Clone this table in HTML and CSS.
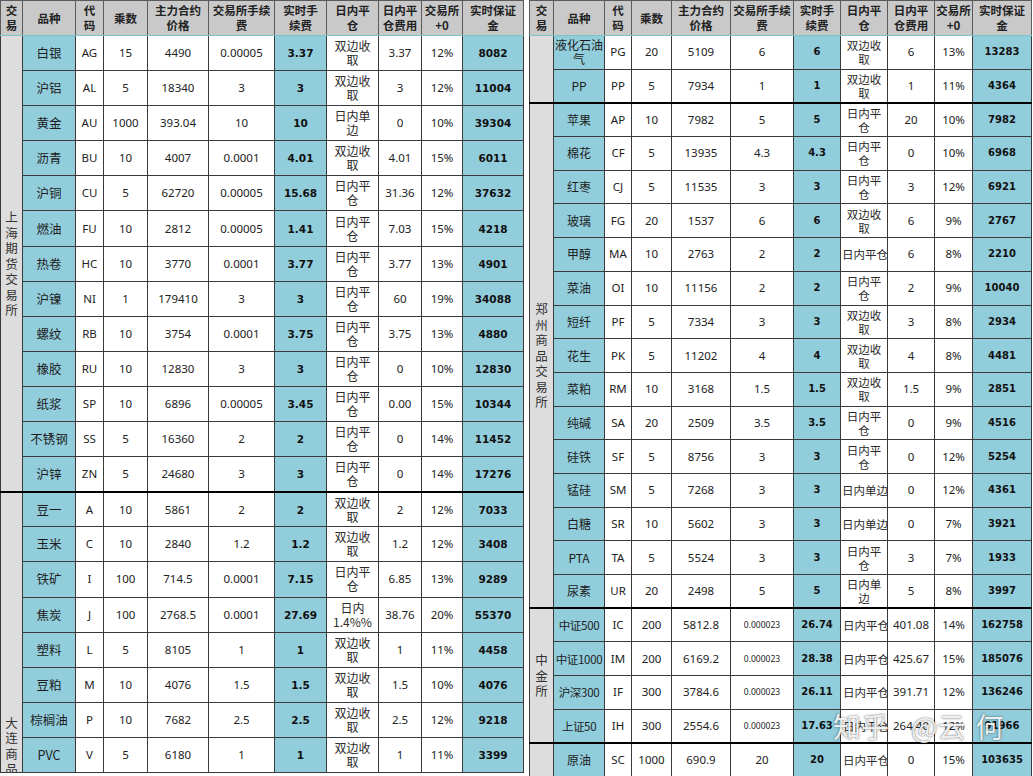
FILE: index.html
```html
<!DOCTYPE html>
<html lang="zh-CN">
<head>
<meta charset="utf-8">
<title>期货品种手续费与保证金</title>
<link rel="stylesheet" href="styles.css">
</head>
<body>
<div class="page">
  <table class="sheet t-left">
    <colgroup>
      <col class="l0"><col class="l1"><col class="l2"><col class="l3"><col class="l4"><col class="l5"><col class="l6"><col class="l7"><col class="l8"><col class="l9"><col class="l10">
    </colgroup>
    <thead>
      <tr class="hd">
        <th>交<br>易</th><th>品种</th><th>代<br>码</th><th>乘数</th><th>主力合约<br>价格</th><th>交易所手续<br>费</th><th>实时手<br>续费</th><th>日内平<br>仓</th><th>日内平<br>仓费用</th><th>交易所<br>+0</th><th>实时保证<br>金</th>
      </tr>
    </thead>
    <tbody>
      <tr class="lr"><td class="ex" rowspan="13">上海期货交易所</td><td class="nm">白银</td><td>AG</td><td>15</td><td>4490</td><td>0.00005</td><td class="fb">3.37</td><td class="zh">双边收<br>取</td><td>3.37</td><td>12%</td><td class="mg">8082</td></tr>
      <tr class="lr"><td class="nm">沪铝</td><td>AL</td><td>5</td><td>18340</td><td>3</td><td class="fb">3</td><td class="zh">双边收<br>取</td><td>3</td><td>12%</td><td class="mg">11004</td></tr>
      <tr class="lr"><td class="nm">黄金</td><td>AU</td><td>1000</td><td>393.04</td><td>10</td><td class="fb">10</td><td class="zh">日内单<br>边</td><td>0</td><td>10%</td><td class="mg">39304</td></tr>
      <tr class="lr"><td class="nm">沥青</td><td>BU</td><td>10</td><td>4007</td><td>0.0001</td><td class="fb">4.01</td><td class="zh">双边收<br>取</td><td>4.01</td><td>15%</td><td class="mg">6011</td></tr>
      <tr class="lr"><td class="nm">沪铜</td><td>CU</td><td>5</td><td>62720</td><td>0.00005</td><td class="fb">15.68</td><td class="zh">日内平<br>仓</td><td>31.36</td><td>12%</td><td class="mg">37632</td></tr>
      <tr class="lr"><td class="nm">燃油</td><td>FU</td><td>10</td><td>2812</td><td>0.00005</td><td class="fb">1.41</td><td class="zh">日内平<br>仓</td><td>7.03</td><td>15%</td><td class="mg">4218</td></tr>
      <tr class="lr"><td class="nm">热卷</td><td>HC</td><td>10</td><td>3770</td><td>0.0001</td><td class="fb">3.77</td><td class="zh">日内平<br>仓</td><td>3.77</td><td>13%</td><td class="mg">4901</td></tr>
      <tr class="lr"><td class="nm">沪镍</td><td>NI</td><td>1</td><td>179410</td><td>3</td><td class="fb">3</td><td class="zh">日内平<br>仓</td><td>60</td><td>19%</td><td class="mg">34088</td></tr>
      <tr class="lr"><td class="nm">螺纹</td><td>RB</td><td>10</td><td>3754</td><td>0.0001</td><td class="fb">3.75</td><td class="zh">日内平<br>仓</td><td>3.75</td><td>13%</td><td class="mg">4880</td></tr>
      <tr class="lr"><td class="nm">橡胶</td><td>RU</td><td>10</td><td>12830</td><td>3</td><td class="fb">3</td><td class="zh">日内平<br>仓</td><td>0</td><td>10%</td><td class="mg">12830</td></tr>
      <tr class="lr"><td class="nm">纸浆</td><td>SP</td><td>10</td><td>6896</td><td>0.00005</td><td class="fb">3.45</td><td class="zh">日内平<br>仓</td><td>0.00</td><td>15%</td><td class="mg">10344</td></tr>
      <tr class="lr"><td class="nm">不锈钢</td><td>SS</td><td>5</td><td>16360</td><td>2</td><td class="fb">2</td><td class="zh">日内平<br>仓</td><td>0</td><td>14%</td><td class="mg">11452</td></tr>
      <tr class="lr"><td class="nm">沪锌</td><td>ZN</td><td>5</td><td>24680</td><td>3</td><td class="fb">3</td><td class="zh">日内平<br>仓</td><td>0</td><td>14%</td><td class="mg">17276</td></tr>
      <tr class="lr grp"><td class="ex ex-top" rowspan="8"><div class="ex-cut">大连商品交易所</div></td><td class="nm">豆一</td><td>A</td><td>10</td><td>5861</td><td>2</td><td class="fb">2</td><td class="zh">双边收<br>取</td><td>2</td><td>12%</td><td class="mg">7033</td></tr>
      <tr class="lr"><td class="nm">玉米</td><td>C</td><td>10</td><td>2840</td><td>1.2</td><td class="fb">1.2</td><td class="zh">双边收<br>取</td><td>1.2</td><td>12%</td><td class="mg">3408</td></tr>
      <tr class="lr"><td class="nm">铁矿</td><td>I</td><td>100</td><td>714.5</td><td>0.0001</td><td class="fb">7.15</td><td class="zh">日内平<br>仓</td><td>6.85</td><td>13%</td><td class="mg">9289</td></tr>
      <tr class="lr"><td class="nm">焦炭</td><td>J</td><td>100</td><td>2768.5</td><td>0.0001</td><td class="fb">27.69</td><td class="zh">日内<br>1.4%%</td><td>38.76</td><td>20%</td><td class="mg">55370</td></tr>
      <tr class="lr"><td class="nm">塑料</td><td>L</td><td>5</td><td>8105</td><td>1</td><td class="fb">1</td><td class="zh">双边收<br>取</td><td>1</td><td>11%</td><td class="mg">4458</td></tr>
      <tr class="lr"><td class="nm">豆粕</td><td>M</td><td>10</td><td>4076</td><td>1.5</td><td class="fb">1.5</td><td class="zh">双边收<br>取</td><td>1.5</td><td>10%</td><td class="mg">4076</td></tr>
      <tr class="lr"><td class="nm">棕榈油</td><td>P</td><td>10</td><td>7682</td><td>2.5</td><td class="fb">2.5</td><td class="zh">双边收<br>取</td><td>2.5</td><td>12%</td><td class="mg">9218</td></tr>
      <tr class="lr"><td class="nm">PVC</td><td>V</td><td>5</td><td>6180</td><td>1</td><td class="fb">1</td><td class="zh">双边收<br>取</td><td>1</td><td>11%</td><td class="mg">3399</td></tr>
    </tbody>
  </table>

  <table class="sheet t-right">
    <colgroup>
      <col class="r0"><col class="r1"><col class="r2"><col class="r3"><col class="r4"><col class="r5"><col class="r6"><col class="r7"><col class="r8"><col class="r9"><col class="r10">
    </colgroup>
    <thead>
      <tr class="hd">
        <th>交<br>易</th><th>品种</th><th>代<br>码</th><th>乘数</th><th>主力合约<br>价格</th><th>交易所手续<br>费</th><th>实时手<br>续费</th><th>日内平<br>仓</th><th>日内平<br>仓费用</th><th>交易所<br>+0</th><th>实时保证<br>金</th>
      </tr>
    </thead>
    <tbody>
      <tr class="rr"><td class="ex" rowspan="2"></td><td class="nm">液化石油<br>气</td><td>PG</td><td>20</td><td>5109</td><td>6</td><td class="fb">6</td><td class="zh">双边收<br>取</td><td>6</td><td>13%</td><td class="mg">13283</td></tr>
      <tr class="rr"><td class="nm">PP</td><td>PP</td><td>5</td><td>7934</td><td>1</td><td class="fb">1</td><td class="zh">双边收<br>取</td><td>1</td><td>11%</td><td class="mg">4364</td></tr>
      <tr class="rr grp"><td class="ex" rowspan="15">郑州商品交易所</td><td class="nm">苹果</td><td>AP</td><td>10</td><td>7982</td><td>5</td><td class="fb">5</td><td class="zh">日内平<br>仓</td><td>20</td><td>10%</td><td class="mg">7982</td></tr>
      <tr class="rr"><td class="nm">棉花</td><td>CF</td><td>5</td><td>13935</td><td>4.3</td><td class="fb">4.3</td><td class="zh">日内平<br>仓</td><td>0</td><td>10%</td><td class="mg">6968</td></tr>
      <tr class="rr"><td class="nm">红枣</td><td>CJ</td><td>5</td><td>11535</td><td>3</td><td class="fb">3</td><td class="zh">日内平<br>仓</td><td>3</td><td>12%</td><td class="mg">6921</td></tr>
      <tr class="rr"><td class="nm">玻璃</td><td>FG</td><td>20</td><td>1537</td><td>6</td><td class="fb">6</td><td class="zh">双边收<br>取</td><td>6</td><td>9%</td><td class="mg">2767</td></tr>
      <tr class="rr"><td class="nm">甲醇</td><td>MA</td><td>10</td><td>2763</td><td>2</td><td class="fb">2</td><td class="zh one">日内平仓</td><td>6</td><td>8%</td><td class="mg">2210</td></tr>
      <tr class="rr"><td class="nm">菜油</td><td>OI</td><td>10</td><td>11156</td><td>2</td><td class="fb">2</td><td class="zh">日内平<br>仓</td><td>2</td><td>9%</td><td class="mg">10040</td></tr>
      <tr class="rr"><td class="nm">短纤</td><td>PF</td><td>5</td><td>7334</td><td>3</td><td class="fb">3</td><td class="zh">双边收<br>取</td><td>3</td><td>8%</td><td class="mg">2934</td></tr>
      <tr class="rr"><td class="nm">花生</td><td>PK</td><td>5</td><td>11202</td><td>4</td><td class="fb">4</td><td class="zh">双边收<br>取</td><td>4</td><td>8%</td><td class="mg">4481</td></tr>
      <tr class="rr"><td class="nm">菜粕</td><td>RM</td><td>10</td><td>3168</td><td>1.5</td><td class="fb">1.5</td><td class="zh">双边收<br>取</td><td>1.5</td><td>9%</td><td class="mg">2851</td></tr>
      <tr class="rr"><td class="nm">纯碱</td><td>SA</td><td>20</td><td>2509</td><td>3.5</td><td class="fb">3.5</td><td class="zh">日内平<br>仓</td><td>0</td><td>9%</td><td class="mg">4516</td></tr>
      <tr class="rr"><td class="nm">硅铁</td><td>SF</td><td>5</td><td>8756</td><td>3</td><td class="fb">3</td><td class="zh">日内平<br>仓</td><td>0</td><td>12%</td><td class="mg">5254</td></tr>
      <tr class="rr"><td class="nm">锰硅</td><td>SM</td><td>5</td><td>7268</td><td>3</td><td class="fb">3</td><td class="zh one">日内单边</td><td>0</td><td>12%</td><td class="mg">4361</td></tr>
      <tr class="rr"><td class="nm">白糖</td><td>SR</td><td>10</td><td>5602</td><td>3</td><td class="fb">3</td><td class="zh one">日内单边</td><td>0</td><td>7%</td><td class="mg">3921</td></tr>
      <tr class="rr"><td class="nm">PTA</td><td>TA</td><td>5</td><td>5524</td><td>3</td><td class="fb">3</td><td class="zh">日内平<br>仓</td><td>3</td><td>7%</td><td class="mg">1933</td></tr>
      <tr class="rr"><td class="nm">尿素</td><td>UR</td><td>20</td><td>2498</td><td>5</td><td class="fb">5</td><td class="zh">日内单<br>边</td><td>5</td><td>8%</td><td class="mg">3997</td></tr>
      <tr class="rr grp"><td class="ex" rowspan="4">中金所</td><td class="nm one">中证500</td><td>IC</td><td>200</td><td>5812.8</td><td class="sm">0.000023</td><td class="fb">26.74</td><td class="zh one clip">日内平仓</td><td>401.08</td><td>14%</td><td class="mg">162758</td></tr>
      <tr class="rr"><td class="nm one">中证1000</td><td>IM</td><td>200</td><td>6169.2</td><td class="sm">0.000023</td><td class="fb">28.38</td><td class="zh one clip">日内平仓</td><td>425.67</td><td>15%</td><td class="mg">185076</td></tr>
      <tr class="rr"><td class="nm one">沪深300</td><td>IF</td><td>300</td><td>3784.6</td><td class="sm">0.000023</td><td class="fb">26.11</td><td class="zh one clip">日内平仓</td><td>391.71</td><td>12%</td><td class="mg">136246</td></tr>
      <tr class="rr"><td class="nm one">上证50</td><td>IH</td><td>300</td><td>2554.6</td><td class="sm">0.000023</td><td class="fb">17.63</td><td class="zh one clip">日内平仓</td><td>264.40</td><td>12%</td><td class="mg">91966</td></tr>
      <tr class="rr grp"><td class="ex"></td><td class="nm">原油</td><td>SC</td><td>1000</td><td>690.9</td><td>20</td><td class="fb">20</td><td class="zh one clip">日内平仓</td><td>0</td><td>15%</td><td class="mg">103635</td></tr>
    </tbody>
  </table>

  <div class="wm">知乎<span class="wm-gap1"></span>@云<span class="wm-gap2"></span>何</div>
</div>
</body>
</html>
```

FILE: styles.css
```css
* {
  box-sizing: border-box;
}

html,
body {
  margin: 0;
  padding: 0;
  background: #ffffff;
}

.page {
  position: relative;
  width: 1033px;
  height: 776px;
  overflow: hidden;
  display: flex;
  align-items: flex-start;
  gap: 5px;
  font-family: "Noto Sans", "Noto Sans CJK SC", sans-serif;
  color: #1f1f1f;
}

.sheet {
  border-collapse: collapse;
  table-layout: fixed;
}

.t-left {
  width: 523px;
}

.t-right {
  width: 502px;
}

/* column widths - left */
.l0 { width: 22px; }
.l1 { width: 53px; }
.l2 { width: 28px; }
.l3 { width: 44px; }
.l4 { width: 61px; }
.l5 { width: 66px; }
.l6 { width: 52px; }
.l7 { width: 52px; }
.l8 { width: 43px; }
.l9 { width: 41px; }
.l10 { width: 61px; }

/* column widths - right */
.r0 { width: 24px; }
.r1 { width: 51px; }
.r2 { width: 27px; }
.r3 { width: 40px; }
.r4 { width: 59px; }
.r5 { width: 63px; }
.r6 { width: 47px; }
.r7 { width: 47px; }
.r8 { width: 47px; }
.r9 { width: 38px; }
.r10 { width: 59px; }

.sheet th,
.sheet td {
  border: 1px solid #3a3a3a;
  padding: 0 1px;
  text-align: center;
  vertical-align: middle;
  overflow: hidden;
  font-size: 11.5px;
  line-height: 14px;
  font-weight: normal;
  color: #222;
}

.sheet th {
  background: #c9c9c9;
  font-family: "Noto Sans CJK SC", sans-serif;
  font-weight: bold;
  font-size: 11.5px;
  line-height: 15px;
  color: #222;
  border-color: #5a5a5a;
  border-bottom: 1px solid #7cc3c6;
}

.hd {
  height: 35px;
}

.lr {
  height: 35.1px;
}

.rr {
  height: 33.7px;
}

.sheet .grp > td {
  border-top: 2px solid #000;
}

.sheet td.ex {
  background: #dddddd;
  font-family: "Noto Sans CJK SC", sans-serif;
  font-size: 12.5px;
  line-height: 15.5px;
  color: #333;
  padding: 0 3px;
}

.sheet td.ex-top {
  vertical-align: top;
}

.ex-cut {
  padding-top: 222px;
  margin-bottom: -220px;
}

.sheet td.nm {
  background: #92cddc;
  font-family: "Noto Sans CJK SC", sans-serif;
  font-size: 12.5px;
  color: #1d1d1d;
}

.t-right td.nm {
  font-size: 12px;
  padding: 0;
}

.sheet td.zh {
  font-family: "Noto Sans CJK SC", sans-serif;
  font-size: 12px;
  color: #2a2a2a;
}

.t-right td.zh {
  font-size: 11.5px;
}

.sheet td.one {
  white-space: nowrap;
}

.t-right td.nm.one {
  font-size: 11.5px;
  letter-spacing: -0.3px;
}

.sheet td.clip {
  text-align: left;
  padding-left: 2px;
  text-overflow: clip;
}

.sheet td.fb,
.sheet td.mg {
  background: #92cddc;
  font-family: "DejaVu Sans", sans-serif;
  font-weight: bold;
  font-size: 10.5px;
  color: #111;
}

.t-right td.fb,
.t-right td.mg {
  font-size: 10px;
}

.sheet td.sm {
  font-size: 8.5px;
}

.wm {
  position: absolute;
  left: 833px;
  top: 706px;
  font-family: "Noto Sans CJK SC", sans-serif;
  font-size: 28px;
  line-height: 40px;
  color: rgba(255, 255, 255, 0.92);
  text-shadow: 0 0 1px rgba(0, 0, 0, 0.55), 0 0 3px rgba(0, 0, 0, 0.35);
  white-space: nowrap;
  pointer-events: none;
}

.wm-gap1 {
  display: inline-block;
  width: 22px;
}

.wm-gap2 {
  display: inline-block;
  width: 10px;
}
```
